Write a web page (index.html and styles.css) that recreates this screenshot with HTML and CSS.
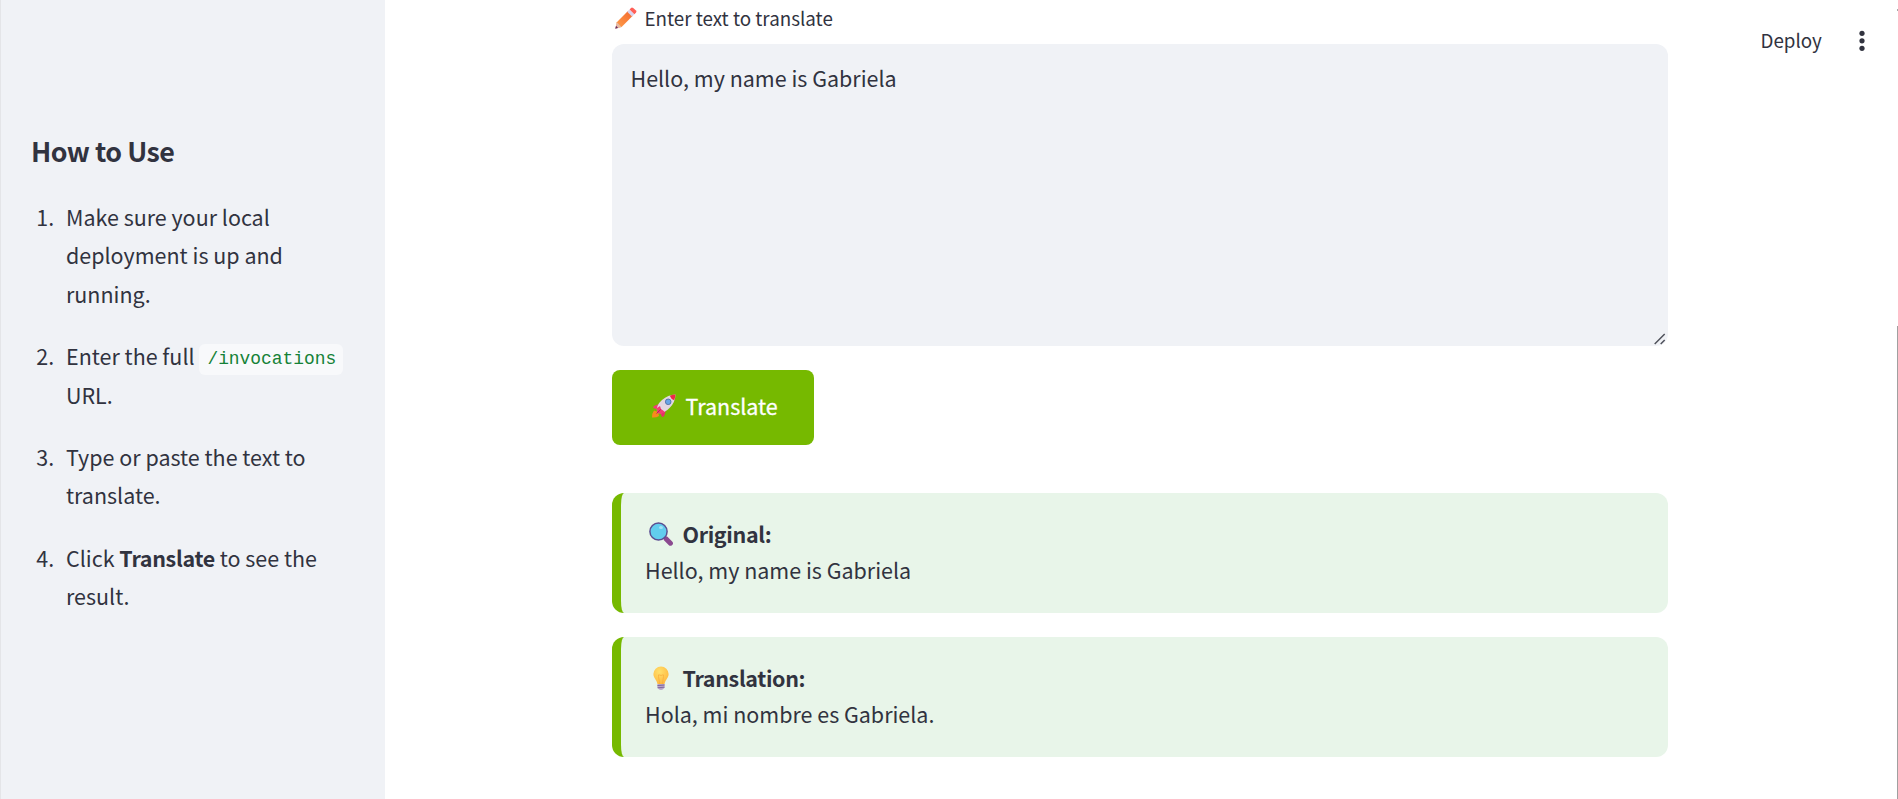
FILE: index.html
```html
<!DOCTYPE html>
<html lang="en">
<head>
<meta charset="utf-8">
<title>Translate</title>
<link rel="stylesheet" href="styles.css">
</head>
<body>
<div class="app">
  <aside class="sidebar">
    <h3 class="sidebar-title">How to Use</h3>
    <ol class="steps">
      <li>Make sure your local<br>deployment is up and<br>running.</li>
      <li>Enter the full <code>/invocations</code><br>URL.</li>
      <li>Type or paste the text to<br>translate.</li>
      <li>Click <strong>Translate</strong> to see the<br>result.</li>
    </ol>
  </aside>
  <main class="main">
    <div class="label">
      <svg class="icon-pencil" viewBox="0 0 22 22">
        <defs><linearGradient id="pg" x1="0" y1="1" x2="1" y2="0"><stop offset="0" stop-color="#ffa04a"/><stop offset="1" stop-color="#f3672f"/></linearGradient></defs>
        <path d="M1.800 15.200 13.200 3.800 18 8.600 6.600 20 .8 21.200Z" fill="url(#pg)"/>
        <path d="M1.800 15.200 6.600 20 .4 21.600Z" fill="#e5b9a4"/>
        <path d="M1 18.800 3.200 21 .2 21.800Z" fill="#6b2a5c"/>
        <path d="M12.200 4.800 14.600 2.400 19.400 7.200 17 9.600Z" fill="#d9d3ee"/>
        <path d="M14.600 2.400 16 .9Q17 0 18.200 1L21 3.600Q22 4.700 20.900 5.800L19.400 7.200Z" fill="#ff5f57"/>
      </svg>
      <span>Enter text to translate</span>
    </div>
    <div class="textarea"><span>Hello, my name is Gabriela</span>
      <svg class="grip" viewBox="0 0 12 12"><path d="M.7 11 10.700 1M6.700 11 10.700 7" stroke="#50525c" stroke-width="1.500" fill="none"/></svg>
    </div>
    <div class="button">
      <svg class="icon-rocket" viewBox="0 0 24 24">
        <path d="M2 16.500 6 18 7 22Q4 24 0 23.500 0 19 2 16.500Z" fill="#f98a1d"/>
        <path d="M8 9.500 2 12Q.5 13 1.500 14L6.500 16Z" fill="#f23d74"/>
        <path d="M14 16 12.300 21.500Q11 24 9.500 22L8 18Z" fill="#e92e68"/>
        <path d="M5 18Q4 11 10 6 16 .8 23.500.5 23.300 8 18 13.500 13 19 6.500 19.300Z" fill="#e2d6e2"/>
        <path d="M17.800 1.700Q20.500.600 23.500.5 23.400 3.500 22.200 6.300 19 5.200 17.800 1.700Z" fill="#ef2947"/>
        <path d="M5 14 8 12 9 15 12.500 17.500 9.500 20 5 19Z" fill="#f23d74"/>
        <path d="M8.800 15.400 4.500 19.500" stroke="#b91e60" stroke-width="1"/>
        <circle cx="16.200" cy="7.800" r="2.800" fill="#68a4e7" stroke="#506da5" stroke-width=".9"/>
      </svg>
      <span>Translate</span>
    </div>
    <section class="card">
      <div class="card-head">
        <svg class="icon-emoji" viewBox="0 0 24 24">
          <path d="M14.500 14.500 17 17" stroke="#5c4a83" stroke-width="3"/>
          <path d="M17.200 17 21.400 21.200" stroke="#8b4a90" stroke-width="5" stroke-linecap="round"/>
          <circle cx="9.500" cy="9.500" r="8.600" fill="#62cdee" stroke="#5b4d91" stroke-width="1.500"/>
          <ellipse cx="12" cy="5.500" rx="2" ry="1.500" fill="#a1e3f7"/>
        </svg>
        <strong>Original:</strong>
      </div>
      <div>Hello, my name is Gabriela</div>
    </section>
    <section class="card">
      <div class="card-head">
        <svg class="icon-emoji" viewBox="0 0 24 24">
          <defs><radialGradient id="bg" cx=".4" cy=".3" r=".7"><stop offset="0" stop-color="#ffe06b"/><stop offset="1" stop-color="#ffb940"/></radialGradient></defs>
          <path d="M12 .5A7.600 7.600 0 0 1 19.600 8C19.600 12 16.500 13.500 15.500 18H8.500C7.500 13.500 4.400 12 4.400 8A7.600 7.600 0 0 1 12 .5Z" fill="url(#bg)"/>
          <path d="M10.700 18 9.500 10.500Q9 8 10.700 9 12 10 13.300 9 15 8 14.500 10.500L13.300 18" fill="none" stroke="#f8ad3d" stroke-width=".8"/>
          <path d="M8.400 18H15.600V21.500Q14 24 12 24 10 24 8.400 21.500Z" fill="#b9a7c8"/>
          <path d="M8.400 19.600 15.600 19M8.600 21.800 15.500 21.200" stroke="#74558f" stroke-width=".8"/>
        </svg>
        <strong>Translation:</strong>
      </div>
      <div>Hola, mi nombre es Gabriela.</div>
    </section>
  </main>
  <header class="toolbar">
    <span>Deploy</span>
    <svg class="menu-dots" viewBox="0 0 6 22"><g fill="#31333f"><circle cx="3" cy="3.300" r="2.600"/><circle cx="3" cy="10.800" r="2.600"/><circle cx="3" cy="18.300" r="2.600"/></g></svg>
  </header>
  <div class="scroll-track"><i class="scroll-arrow"></i><i class="scroll-thumb"></i></div>
</div>
</body>
</html>
```
FILE: styles.css
```css
* { box-sizing: border-box; }
body {
  margin: 0;
  background: #fff;
  color: #31333f;
  font-family: "Noto Sans CJK SC", sans-serif;
  font-size: 21.48px;
  overflow: hidden;
}
.app { display: flex; height: 799px; }
svg { display: block; flex: none; }
.sidebar {
  width: 385px;
  flex: none;
  background: #f0f2f6;
  border-left: 1px solid #e4e5e8;
  padding: 133px 0 0 30px;
}
.sidebar-title { margin: 0; font-size: 26.8px; line-height: 36px; font-weight: 600; letter-spacing: -.5px; }
.steps { margin: 29px 0 0 28px; padding: 0; line-height: 38.4px; }
.steps li { padding-left: 7px; margin-bottom: 24px; white-space: nowrap; }
.steps strong { font-weight: 600; letter-spacing: -.3px; }
.steps code {
  display: inline-block;
  height: 31px;
  line-height: 31px;
  margin: -4px 0;
  vertical-align: 1px;
  padding: 0 7px 0 8px;
  border-radius: 6px;
  background: #f8f9fb;
  color: #158237;
  font-family: "Liberation Mono", monospace;
  font-size: 17.9px;
}
.main { width: 1056px; margin-left: 227px; flex: none; }
.label { display: flex; align-items: center; height: 44px; padding: 0 0 8px 3px; font-size: 18.8px; line-height: 36px; }
.icon-pencil { width: 22px; height: 22px; margin-right: 7.5px; }
.textarea { position: relative; height: 302px; border-radius: 12px; background: #f0f2f6; padding: 16px 18.5px; line-height: 36px; }
.grip { position: absolute; right: 2px; bottom: 1px; width: 12px; height: 12px; }
.button {
  display: flex;
  align-items: center;
  width: 202px;
  height: 75px;
  margin-top: 24px;
  padding: 0 0 4px 40px;
  border-radius: 8px;
  background: #76b900;
  color: #fff;
  -webkit-text-stroke: .3px #fff;
}
.icon-rocket { width: 24px; height: 24px; margin-right: 9.5px; }
.card {
  height: 120px;
  margin-top: 24px;
  padding: 23px 24px;
  border-left: 9px solid #76b900;
  border-radius: 12px;
  background: #e8f5e9;
  line-height: 36px;
}
.button + .card { margin-top: 48px; }
.card-head { display: flex; align-items: center; height: 36px; padding-left: 4px; }
.card-head strong { font-weight: 600; letter-spacing: -.35px; }
.icon-emoji { width: 24px; height: 24px; margin-right: 9.5px; }
.toolbar { display: flex; align-items: center; height: 80px; margin-left: 92.5px; padding-bottom: 2px; font-size: 18.8px; }
.menu-dots { width: 6px; height: 22px; margin: 3px 0 0 37px; }
.scroll-track { display: flex; flex-direction: column; width: 1px; margin-left: auto; }
.scroll-arrow { height: 2px; margin-top: 9px; background: #a8a8a8; }
.scroll-thumb { flex: 1; margin-top: 315px; background: #a0a0a0; }
```
